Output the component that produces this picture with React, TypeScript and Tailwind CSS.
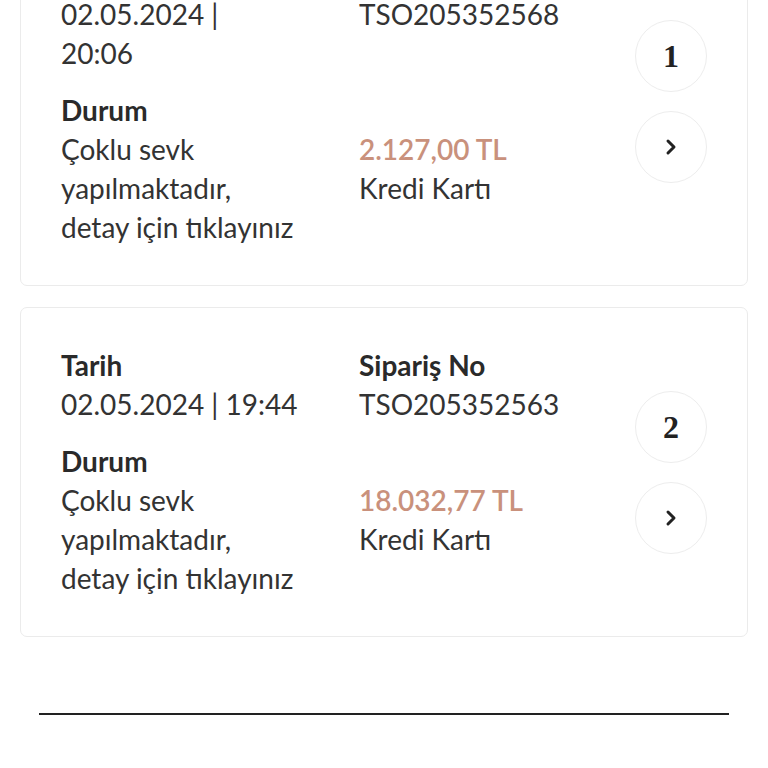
import React from "react";

interface Order {
  index: number;
  date: React.ReactNode;
  orderNo: string;
  amount: string;
  payment: string;
}

const orders: Order[] = [
  {
    index: 1,
    date: (
      <>
        <span className="block">02.05.2024 |</span>
        <span className="block">20:06</span>
      </>
    ),
    orderNo: "TSO205352568",
    amount: "2.127,00 TL",
    payment: "Kredi Kartı",
  },
  {
    index: 2,
    date: <span className="block whitespace-nowrap">02.05.2024 | 19:44</span>,
    orderNo: "TSO205352563",
    amount: "18.032,77 TL",
    payment: "Kredi Kartı",
  },
];

function Chevron() {
  return (
    <svg width="12" height="18" viewBox="0 0 12 18" fill="none">
      <path d="M3 3l6 6-6 6" stroke="#222" strokeWidth="3" strokeLinecap="round" strokeLinejoin="round" />
    </svg>
  );
}

function OrderCard({ order }: { order: Order }) {
  return (
    <div className="flex items-center rounded-[7px] border border-[#ebebeb] bg-white px-10 py-[38px]">
      <div className="grid flex-1 grid-cols-[298px_1fr] gap-y-[18px] text-[28px] leading-[39px] text-[#333]">
        <div>
          <div className="font-bold text-[#2a2a2a]">Tarih</div>
          {order.date}
        </div>
        <div>
          <div className="font-bold text-[#2a2a2a]">Sipariş No</div>
          <div>{order.orderNo}</div>
        </div>
        <div>
          <div className="font-bold text-[#2a2a2a]">Durum</div>
          <span className="block">Çoklu sevk</span>
          <span className="block">yapılmaktadır,</span>
          <span className="block">detay için tıklayınız</span>
        </div>
        <div>
          <div className="invisible">&nbsp;</div>
          <div className="font-semibold text-[#c9917c]">{order.amount}</div>
          <div>{order.payment}</div>
        </div>
      </div>
      <div className="flex flex-col gap-[19px]">
        <div className="flex h-[72px] w-[72px] items-center justify-center rounded-full border border-[#ededed] font-['Liberation_Serif',serif] text-[32px] font-bold text-[#222]">
          {order.index}
        </div>
        <button className="flex h-[72px] w-[72px] items-center justify-center rounded-full border border-[#ededed]">
          <Chevron />
        </button>
      </div>
    </div>
  );
}

export default function App() {
  return (
    <div className="h-[768px] overflow-hidden bg-white font-['Lato','Noto_Sans',sans-serif]">
      <div className="-mt-[83px] flex flex-col gap-[21px] px-5">
        {orders.map((o) => (
          <OrderCard key={o.index} order={o} />
        ))}
      </div>
      <div className="mx-[39px] mt-[76px] h-[2px] bg-[#222]" />
    </div>
  );
}
